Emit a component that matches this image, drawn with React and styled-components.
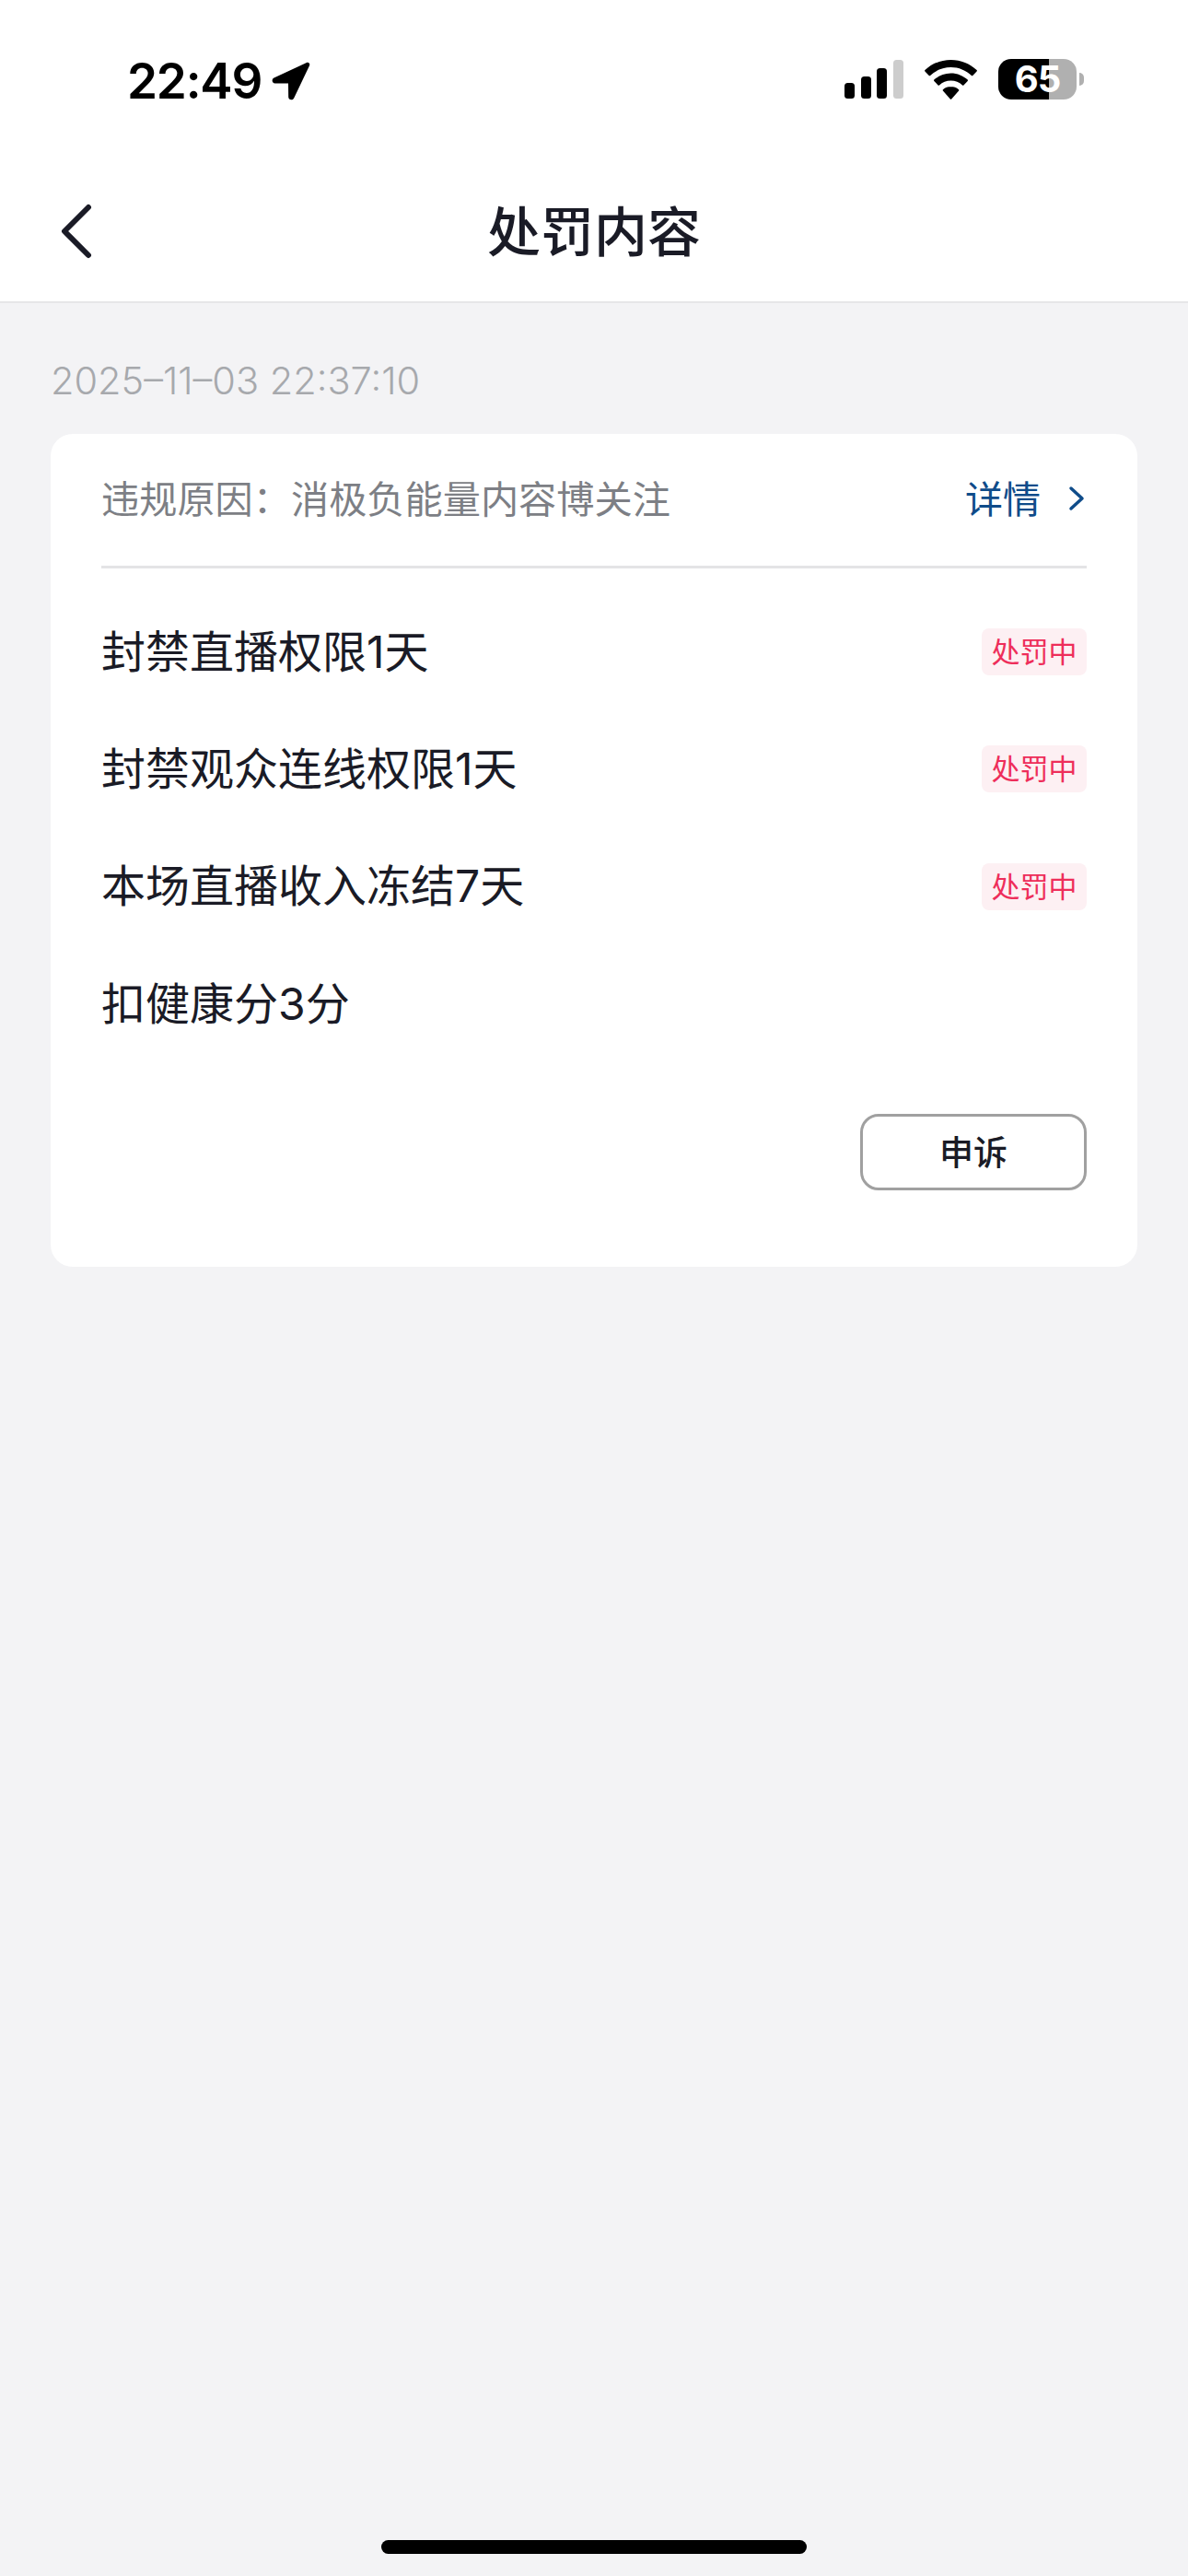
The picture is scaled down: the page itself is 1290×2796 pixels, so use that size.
import React from "react";
import styled, { createGlobalStyle } from "styled-components";

const CJK = `Inter, "Noto Sans CJK SC", "Noto Sans", sans-serif`;

const Global = createGlobalStyle`
  html, body { margin: 0; padding: 0; background: #f3f3f5; }
  * { box-sizing: border-box; }
  body { font-family: ${CJK}; }
`;

const Page = styled.div`
  width: 1290px;
  height: 2796px;
  display: flex;
  flex-direction: column;
  background: #f3f3f5;
  overflow: hidden;
`;
const Header = styled.header`
  background: #fff;
  border-bottom: 2px solid #e6e6e8;
`;
const StatusBar = styled.div`
  height: 172px;
  padding: 64px 113px 0 138px;
  display: flex;
  justify-content: space-between;
  align-items: flex-start;
`;
const TimeGroup = styled.div`
  display: flex;
  align-items: center;
  gap: 11px;
  height: 48px;
`;
const Time = styled.span`
  font: 600 53px/46px Inter, sans-serif;
  letter-spacing: -1.2px;
  color: #000;
`;
const StatusIcons = styled.div`
  display: flex;
  align-items: flex-end;
  height: 44px;
`;
const Signal = styled.svg`
  width: 64px;
  height: 42px;
  margin-right: 23px;
  margin-bottom: 1px;
`;
const Wifi = styled.svg`
  width: 57px;
  height: 43px;
  margin-right: 23px;
`;
const BatteryWrap = styled.div`
  display: flex;
  align-items: center;
  gap: 3px;
`;
const BatteryBody = styled.div`
  width: 85px;
  height: 44px;
  border-radius: 14px;
  background: linear-gradient(90deg, #000 0, #000 55px, #b0b0b0 55px, #b0b0b0 100%);
  color: #fff;
  font: 700 40px/44px Inter, sans-serif;
  letter-spacing: -1px;
  text-align: center;
`;
const BatteryCap = styled.div`
  width: 5px;
  height: 14px;
  border-radius: 0 5px 5px 0;
  background: #b0b0b0;
`;
const Nav = styled.nav`
  height: 155px;
  display: grid;
  grid-template-columns: 1fr auto 1fr;
  align-items: center;
`;
const BackIcon = styled.svg`
  width: 36px;
  height: 62px;
  display: block;
  margin: 2px 0 0 66px;
`;
const Title = styled.h1`
  margin: 0;
  padding-bottom: 3px;
  font: 500 58px/70px "Noto Sans CJK SC", sans-serif;
  color: #1a1b26;
`;
const Main = styled.main`
  flex: 1;
  padding: 54px 55px 0;
`;
const DateLine = styled.div`
  font: 300 41.500px/60px Inter, sans-serif;
  color: #a7a9ad;
  margin-bottom: 28px;
`;
const Card = styled.section`
  background: #fff;
  border-radius: 24px;
  padding: 0 55px 83px;
`;
const CardHead = styled.div`
  height: 146px;
  padding-bottom: 8px;
  border-bottom: 3px solid #e4e4e6;
  display: flex;
  justify-content: space-between;
  align-items: center;
`;
const Reason = styled.span`
  font: 400 41.200px/60px "Noto Sans CJK SC", sans-serif;
  color: #7d7f85;
`;
const Detail = styled.span`
  display: flex;
  align-items: center;
  gap: 30px;
  font: 400 41px/60px "Noto Sans CJK SC", sans-serif;
  color: #0f4c8a;
`;
const DetailIcon = styled.svg`
  width: 18px;
  height: 28px;
  margin-right: 2px;
  margin-top: 4px;
`;
const List = styled.ul`
  list-style: none;
  margin: 0;
  padding: 27px 0 0;
`;
const Row = styled.li`
  height: 127.300px;
  display: flex;
  justify-content: space-between;
  align-items: center;
  font: 400 48px/64px ${CJK};
  color: #1a1b26;
`;
const Badge = styled.span`
  width: 114px;
  height: 51px;
  border-radius: 8px;
  background: #fdf0f3;
  color: #ee2e5a;
  font: 400 31px/48px "Noto Sans CJK SC", sans-serif;
  text-align: center;
`;
const Actions = styled.div`
  display: flex;
  justify-content: flex-end;
  margin-top: 56px;
`;
const Appeal = styled.button`
  width: 246px;
  height: 83px;
  padding: 0 0 3px;
  background: #fff;
  border: 3px solid #a0a0a0;
  border-radius: 20px;
  color: #1a1b26;
  font: 500 37px/74px "Noto Sans CJK SC", sans-serif;
`;
const HomeBarZone = styled.div`
  height: 39px;
  display: flex;
  justify-content: center;
`;
const HomeBar = styled.div`
  width: 462px;
  height: 15px;
  border-radius: 8px;
  background: #000;
`;

const rows = [
  ["封禁直播权限1天", true],
  ["封禁观众连线权限1天", true],
  ["本场直播收入冻结7天", true],
  ["扣健康分3分", false],
];

export default function App() {
  return (
    <Page>
      <Global />
      <Header>
        <StatusBar>
          <TimeGroup>
            <Time>22:49</Time>
            <svg width="42" height="42" viewBox="0 0 42 42">
              <path d="M38 1 2.500 17.500c-3 1.600-2.200 6 1.200 6l14.300.1.200 14.700c0 3.400 4.500 4.200 6 1.200L41 4.200C42 2 40 .1 38 1Z" fill="#000" />
            </svg>
          </TimeGroup>
          <StatusIcons>
            <Signal viewBox="0 0 64 42">
              <rect x="0" y="25" width="11" height="17" rx="3.500" fill="#000" />
              <rect x="18" y="18" width="11" height="24" rx="3.500" fill="#000" />
              <rect x="35" y="9" width="11" height="33" rx="3.500" fill="#000" />
              <rect x="53" y="0" width="11" height="42" rx="3.500" fill="#cdcdcd" />
            </Signal>
            <Wifi viewBox="0 0 57 43">
              <path d="M28.500 0C17.600 0 7.700 4.200.4 11.100c-.4.4-.4 1-.0 1.400l4.300 4.400c.4.4 1 .4 1.400 0C12 11.400 19.900 8 28.500 8s16.500 3.400 22.400 8.900c.4.4 1 .4 1.400 0l4.300-4.400c.4-.4.4-1 0-1.400C49.300 4.200 39.400 0 28.500 0Z" fill="#000" />
              <path d="M28.500 14.500c-7 0-13.400 2.700-18.200 7.100-.4.4-.4 1 0 1.400l4.300 4.400c.4.4 1 .4 1.400 0 3.300-3 7.700-4.900 12.500-4.900s9.200 1.900 12.500 4.900c.4.4 1 .4 1.400 0l4.300-4.400c.4-.4.4-1 0-1.400-4.800-4.400-11.200-7.100-18.200-7.100Z" fill="#000" />
              <path d="M28.500 29c-3.300 0-6.300 1.200-8.600 3.200-.4.4-.4 1 0 1.400l7.900 8.900c.4.4 1 .4 1.400 0l7.900-8.900c.4-.4.4-1 0-1.400-2.300-2-5.300-3.200-8.600-3.200Z" fill="#000" />
            </Wifi>
            <BatteryWrap>
              <BatteryBody>65</BatteryBody>
              <BatteryCap />
            </BatteryWrap>
          </StatusIcons>
        </StatusBar>
        <Nav>
          <BackIcon viewBox="0 0 36 62">
            <path d="M30 5 4 31l26 26" fill="none" stroke="#1a1b26" strokeWidth="6" strokeLinecap="round" strokeLinejoin="round" />
          </BackIcon>
          <Title>处罚内容</Title>
        </Nav>
      </Header>
      <Main>
        <DateLine>2025–11–03 22:37:10</DateLine>
        <Card>
          <CardHead>
            <Reason>违规原因：消极负能量内容博关注</Reason>
            <Detail>
              详情
              <DetailIcon viewBox="0 0 18 28">
                <path d="M3 3l12 11L3 25" fill="none" stroke="#0f4c8a" strokeWidth="3.500" strokeLinecap="round" strokeLinejoin="round" />
              </DetailIcon>
            </Detail>
          </CardHead>
          <List>
            {rows.map(([label, active]) => (
              <Row key={label}>
                <span>{label}</span>
                {active && <Badge>处罚中</Badge>}
              </Row>
            ))}
          </List>
          <Actions>
            <Appeal>申诉</Appeal>
          </Actions>
        </Card>
      </Main>
      <HomeBarZone>
        <HomeBar />
      </HomeBarZone>
    </Page>
  );
}
